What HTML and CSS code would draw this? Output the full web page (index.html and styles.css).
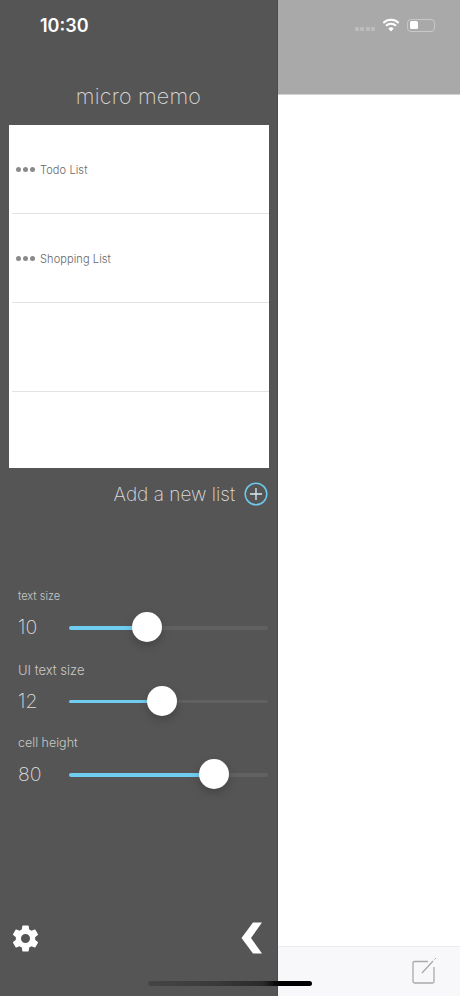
FILE: index.html
```html
<!DOCTYPE html>
<html lang="en">
<head>
  <meta charset="UTF-8">
  <meta name="viewport" content="width=device-width, initial-scale=1.0">
  <title>micro memo</title>
  <link rel="stylesheet" href="styles.css">
</head>
<body>
  <div class="screen">
    <div class="drawer">
      <div class="time">10:30</div>
      <h1 class="title">micro memo</h1>

      <div class="lists">
        <div class="list-row"><span class="dots"><i></i><i></i><i></i></span><span class="list-name">Todo List</span></div>
        <div class="list-row"><span class="dots"><i></i><i></i><i></i></span><span class="list-name">Shopping List</span></div>
        <div class="list-row"></div>
        <div class="list-row"></div>
      </div>

      <div class="add-row">
        <span class="add-text">Add a new list</span>
        <svg class="add-icon" width="24" height="24" viewBox="0 0 24 24">
          <circle cx="12" cy="12" r="10.8" fill="none" stroke="#6cc8ec" stroke-width="1.5"/>
          <path d="M12 6v12M6 12h12" stroke="#d8eef7" stroke-width="1.3"/>
        </svg>
      </div>

      <div class="settings">
        <div class="setting">
          <div class="setting-label">text size</div>
          <div class="setting-row">
            <span class="setting-value">10</span>
            <div class="slider"><div class="fill" style="width: 78px"></div><div class="thumb"></div></div>
          </div>
        </div>
        <div class="setting">
          <div class="setting-label">UI text size</div>
          <div class="setting-row">
            <span class="setting-value">12</span>
            <div class="slider"><div class="fill" style="width: 93px"></div><div class="thumb"></div></div>
          </div>
        </div>
        <div class="setting">
          <div class="setting-label">cell height</div>
          <div class="setting-row">
            <span class="setting-value">80</span>
            <div class="slider"><div class="fill" style="width: 145px"></div><div class="thumb"></div></div>
          </div>
        </div>
      </div>

      <div class="drawer-foot">
        <svg width="31" height="31" viewBox="0 0 24 24">
          <path fill="#fff" fill-rule="evenodd" d="M19.43 12.98c.04-.32.07-.64.07-.98s-.03-.66-.07-.98l2.11-1.65c.19-.15.24-.42.12-.64l-2-3.46c-.12-.22-.39-.3-.61-.22l-2.49 1c-.52-.4-1.08-.73-1.69-.98l-.38-2.65C14.46 2.18 14.25 2 14 2h-4c-.25 0-.46.18-.49.42l-.38 2.65c-.61.25-1.17.59-1.69.98l-2.49-1c-.23-.09-.49 0-.61.22l-2 3.46c-.13.22-.07.49.12.64l2.11 1.65c-.04.32-.07.65-.07.98s.03.66.07.98l-2.11 1.65c-.19.15-.24.42-.12.64l2 3.46c.12.22.39.3.61.22l2.49-1c.52.4 1.08.73 1.69.98l.38 2.65c.03.24.24.42.49.42h4c.25 0 .46-.18.49-.42l.38-2.65c.61-.25 1.17-.59 1.69-.98l2.49 1c.23.09.49 0 .61-.22l2-3.46c.12-.22.07-.49-.12-.64l-2.11-1.65zM12 15.5c-1.93 0-3.5-1.57-3.5-3.5s1.57-3.5 3.5-3.5 3.5 1.57 3.5 3.5-1.57 3.5-3.5 3.5z"/>
        </svg>
        <svg width="24" height="34" viewBox="0 0 24 34">
          <path fill="#fff" d="M13 1.500h9L11 17l11 15.500h-9L1.500 17z"/>
        </svg>
      </div>
    </div>

    <div class="main">
      <div class="main-header">
        <div class="status-icons">
          <span class="signal"><i></i><i></i><i></i><i></i></span>
          <svg width="18" height="14" viewBox="0 0 18 14">
            <path fill="none" stroke="#fff" stroke-width="2" d="M1.300 5a11 11 0 0 1 15.400 0M4 7.800a7.200 7.200 0 0 1 10 0"/>
            <path fill="#fff" d="M9 13.500 6.300 10.500a3.800 3.800 0 0 1 5.400 0z"/>
          </svg>
          <span class="battery"><span class="battery-level"></span></span>
        </div>
      </div>
      <div class="main-body"></div>
      <div class="toolbar">
        <svg width="26" height="28" viewBox="0 0 26 28">
          <path fill="none" stroke="#a9a9ad" stroke-width="1.300" d="M17 5.500H3.500A1.500 1.500 0 0 0 2 7v18.500A1.500 1.500 0 0 0 3.500 27h18a1.500 1.500 0 0 0 1.500-1.500V11"/>
          <path fill="none" stroke="#a9a9ad" stroke-width="1.300" d="M11 17 22 5"/>
          <path fill="none" stroke="#a9a9ad" stroke-width="1" d="M23.500 3.500 25 2"/>
        </svg>
      </div>
    </div>

    <div class="home-bar"></div>
  </div>
</body>
</html>
```

FILE: styles.css
```css
* {
  margin: 0;
  padding: 0;
  box-sizing: border-box;
}

body {
  font-family: 'Inter', 'Liberation Sans', sans-serif;
  background: white;
}

.screen {
  position: relative;
  display: flex;
  width: 460px;
  height: 996px;
  overflow: hidden;
}

/* drawer */
.drawer {
  width: 278px;
  flex-shrink: 0;
  display: flex;
  flex-direction: column;
  background: #555555;
  border-right: 1px solid #4c4c4c;
}

.time {
  height: 50px;
  padding: 15px 0 0 40px;
  color: white;
  font-size: 18px;
  font-weight: 600;
  line-height: 22px;
}

.title {
  height: 75px;
  padding-top: 33px;
  color: #d6d6d6;
  font-size: 21.5px;
  font-weight: 200;
  line-height: 26px;
  letter-spacing: 0.2px;
  text-align: center;
}

.lists {
  width: 259.5px;
  height: 343px;
  margin-left: 9px;
  background: white;
}

.list-row {
  height: 89px;
  padding-left: 6.5px;
  display: flex;
  align-items: center;
  gap: 5px;
  position: relative;
}

.list-row:not(:last-child)::after {
  content: "";
  position: absolute;
  left: 3px;
  right: 0;
  bottom: 0;
  height: 1px;
  background: #e2e2e2;
}

.list-row:last-child {
  height: 76px;
}

.dots {
  display: flex;
  gap: 1.500px;
}

.dots i {
  width: 5.500px;
  height: 5.500px;
  border-radius: 50%;
  background: #8a8a8a;
}

.list-name {
  color: #666666;
  font-size: 11px;
  font-weight: 300;
  letter-spacing: 0.1px;
}

.add-row {
  height: 52px;
  padding-right: 9px;
  display: flex;
  align-items: center;
  justify-content: flex-end;
  gap: 9px;
}

.add-text {
  color: #dcdcdc;
  font-size: 19px;
  font-weight: 200;
}

.settings {
  margin-top: 68px;
  display: flex;
  flex-direction: column;
  gap: 13.5px;
}

.setting {
  padding: 0 9px 0 18px;
}

.setting-label {
  height: 16px;
  color: #c8c8c8;
  font-size: 12.5px;
  font-weight: 300;
  line-height: 16px;
}

.setting:first-child .setting-label {
  font-size: 11px;
}

.setting:nth-child(2) .setting-label {
  font-size: 13px;
}

.setting-row {
  height: 40px;
  margin-top: 4px;
  display: flex;
  align-items: center;
}

.setting-value {
  width: 51px;
  color: #dcdcdc;
  font-size: 19.5px;
  font-weight: 200;
  margin-top: -2px;
}

.slider {
  position: relative;
  flex: 1;
  height: 3.5px;
  background: #616161;
  border-radius: 2px;
}

.fill {
  height: 3.5px;
  background: #6fcdf0;
  border-radius: 2px;
}

.thumb {
  position: absolute;
  top: -14px;
  left: 63px;
  width: 30px;
  height: 30px;
  border-radius: 50%;
  background: white;
  box-shadow: 0 4px 10px rgba(0, 0, 0, 0.2);
}

.setting:nth-child(2) .thumb {
  left: 78px;
}

.setting:nth-child(3) .thumb {
  left: 130px;
}

.drawer-foot {
  margin-top: auto;
  height: 58px;
  padding: 0 13px 0 9.5px;
  margin-bottom: 29px;
  display: flex;
  align-items: center;
  justify-content: space-between;
}

/* main pane */
.main {
  flex: 1;
  display: flex;
  flex-direction: column;
}

.main-header {
  height: 95px;
  padding: 18px 25px 0 0;
  background: #a9a9a9;
  border-bottom: 1px solid #d2d2d2;
}

.status-icons {
  display: flex;
  align-items: center;
  justify-content: flex-end;
  gap: 7px;
}

.signal {
  display: flex;
  gap: 1.500px;
  margin-top: 8px;
}

.signal i {
  width: 4px;
  height: 4px;
  background: #bdbdbd;
  border-radius: 1px;
}

.battery {
  width: 28px;
  height: 13px;
  padding: 1.500px;
  border: 1px solid #c8c8c8;
  border-radius: 4px;
}

.battery-level {
  display: block;
  width: 8px;
  height: 8px;
  background: white;
  border-radius: 1.500px;
}

.main-body {
  flex: 1;
  background: white;
}

.toolbar {
  height: 50px;
  padding: 9px 23px 0 0;
  display: flex;
  justify-content: flex-end;
  background: #f8f8fa;
  border-top: 1px solid #ececee;
}

.home-bar {
  position: absolute;
  left: 148px;
  top: 981px;
  width: 164px;
  height: 5px;
  border-radius: 3px;
  background: linear-gradient(90deg, #454545 0%, #3a3a3a 40%, #2a2a2a 70%, #000 80%);
}
```
